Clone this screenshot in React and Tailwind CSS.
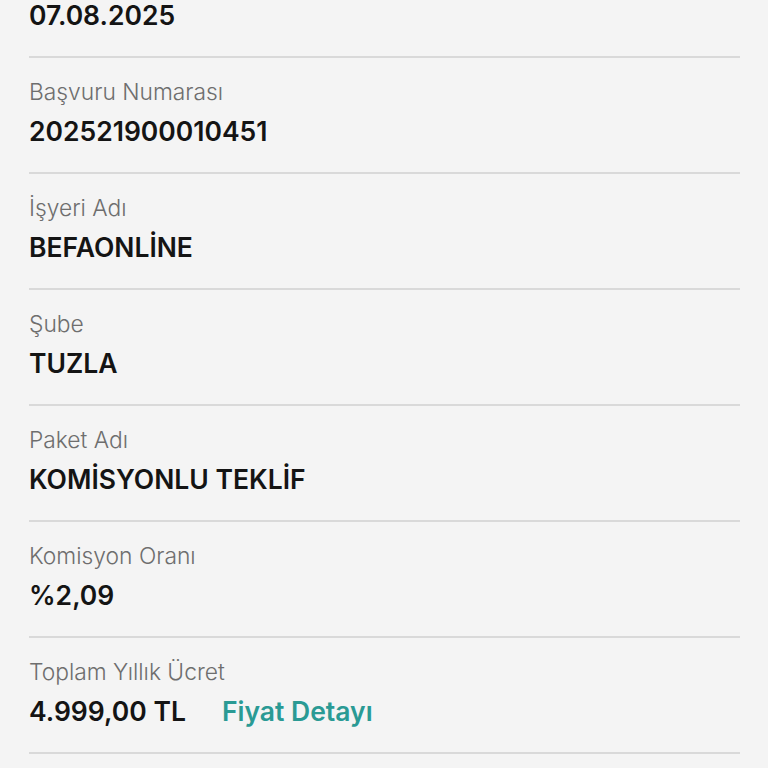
import React from 'react';

const rows = [
  { label: 'Başvuru Tarihi', value: '07.08.2025' },
  { label: 'Başvuru Numarası', value: '202521900010451' },
  { label: 'İşyeri Adı', value: 'BEFAONLİNE' },
  { label: 'Şube', value: 'TUZLA' },
  { label: 'Paket Adı', value: 'KOMİSYONLU TEKLİF' },
  { label: 'Komisyon Oranı', value: '%2,09' },
  { label: 'Toplam Yıllık Ücret', value: '4.999,00 TL', link: 'Fiyat Detayı' },
];

const DetailRow = ({ row }) => (
  <div>
    <div className="pt-[20px] pb-[25px]">
      <div className="text-[22.8px] leading-[28px] font-light text-[#6e6e6e]">{row.label}</div>
      <div className="mt-[9px] flex items-center text-[26.5px] leading-[32px] font-semibold text-[#141414]">
        <span>{row.value}</span>
        {row.link && <span className="ml-[36px] text-[#2a9a94]">{row.link}</span>}
      </div>
    </div>
    <div className="h-[2px] bg-[#d9d9d9]" />
  </div>
);

const App = () => {
  return (
    <div className="h-[768px] overflow-hidden bg-[#f4f4f4]" style={{ fontFamily: 'Inter, "Noto Sans", sans-serif' }}>
      <div className="-mt-[58px] pl-[29px] pr-[28px]">
        {rows.map((row) => (
          <DetailRow key={row.label} row={row} />
        ))}
      </div>
    </div>
  );
};

export default App;
